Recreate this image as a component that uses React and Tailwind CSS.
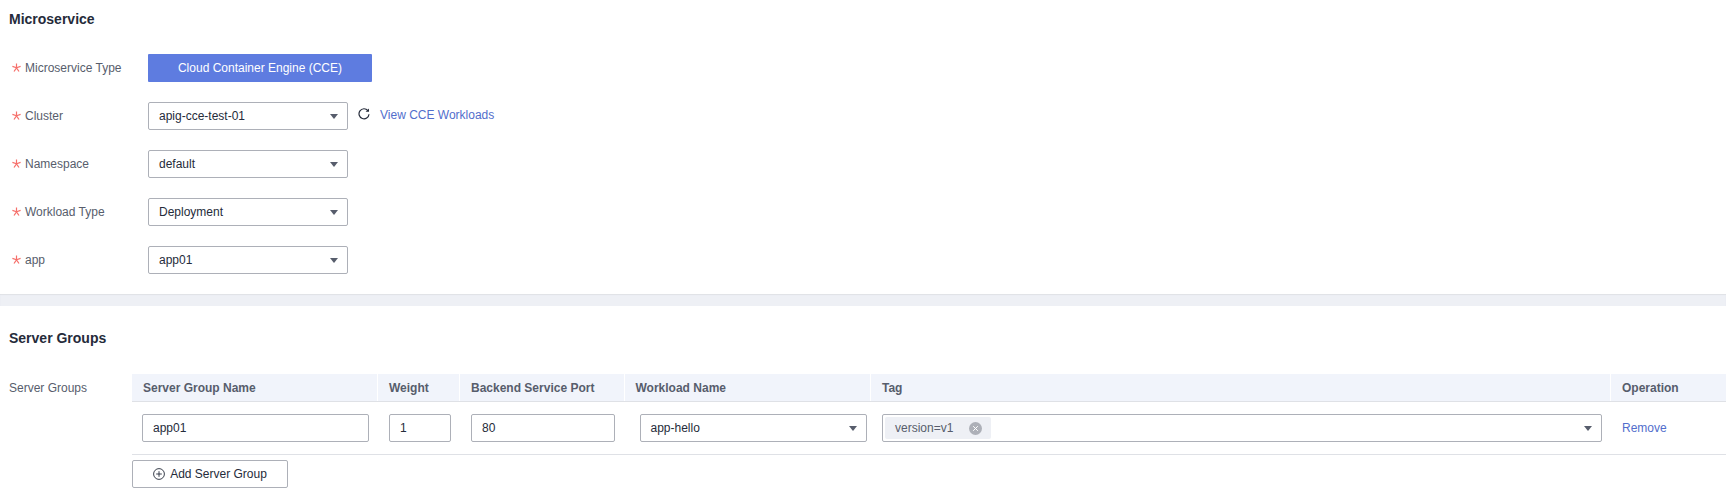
import React from 'react';

const Star = () => (
  <svg width="9" height="9" viewBox="0 0 9 9" className="mb-[1px] shrink-0 text-[#f66f6a]" fill="none" stroke="currentColor">
    <path d="M4.5 0.5V4.8M4.5 4.8L0.4 3.4M4.5 4.8L8.6 3.4M4.5 4.8L2 8.5M4.5 4.8L7 8.5" strokeWidth="1.2" />
  </svg>
);

const Caret = () => (
  <svg width="8" height="5" viewBox="0 0 8 5" className="shrink-0 text-[#575d6c]" fill="currentColor">
    <path d="M0 0H8L4 5Z" />
  </svg>
);

const Select = ({ value, className = 'w-[200px]' }) => (
  <div className={`flex h-7 items-center justify-between rounded-[2px] border border-[#adb0b8] bg-white pl-[10px] pr-[9px] text-[#252b3a] ${className}`}>
    <span>{value}</span>
    <Caret />
  </div>
);

const FormRow = ({ label, children }) => (
  <div className="flex h-7 items-center">
    <div className="flex w-[148px] items-center gap-[4px] pl-[12px] text-[#575d6c]">
      <Star />
      <span>{label}</span>
    </div>
    {children}
  </div>
);

const headers = ['Server Group Name', 'Weight', 'Backend Service Port', 'Workload Name', 'Tag', 'Operation'];

const App = () => {
  return (
    <div className="h-[496px] w-full overflow-hidden bg-white font-['Liberation_Sans',Arial,sans-serif] text-xs">
      <h2 className="flex h-9 items-center pl-[9px] pt-[1px] text-sm font-bold text-[#252b3a]">Microservice</h2>

      <div className="mt-[18px] flex flex-col gap-5 pb-5">
        <FormRow label="Microservice Type">
          <div className="flex h-7 w-[224px] items-center justify-center rounded-[1px] bg-[#5e7ce0] text-white">
            Cloud Container Engine (CCE)
          </div>
        </FormRow>
        <FormRow label="Cluster">
          <Select value="apig-cce-test-01" />
          <svg width="12" height="12" viewBox="0 0 12 12" className="ml-[10px] mb-[4px] text-[#252b3a]" fill="none" stroke="currentColor">
            <path d="M9.9 2.6A5 5 0 1 0 11 6.2" strokeWidth="1.2" />
            <path d="M11 0.4V3.8H7.6" fill="currentColor" stroke="none" />
          </svg>
          <a className="ml-[10px] mb-[3px] text-[#526ecc]">View CCE Workloads</a>
        </FormRow>
        <FormRow label="Namespace">
          <Select value="default" />
        </FormRow>
        <FormRow label="Workload Type">
          <Select value="Deployment" />
        </FormRow>
        <FormRow label="app">
          <Select value="app01" />
        </FormRow>
      </div>

      <div className="h-3 bg-[#eef0f5] shadow-[inset_0_1px_1px_#dfe1e6]" />

      <h2 className="mt-[14px] flex h-9 items-center pl-[9px] text-sm font-bold text-[#252b3a]">Server Groups</h2>

      <div className="mt-[18px] flex">
        <div className="flex h-7 w-[132px] shrink-0 items-center pl-[9px] text-[#575d6c]">Server Groups</div>
        <div className="min-w-0 flex-1">
          <div className="grid h-7 grid-cols-[246px_82px_164.5px_246.5px_740px_1fr] border-b border-[#dfe1e6] bg-[#f1f4fb] font-bold text-[#575d6c]">
            {headers.map((h, i) => (
              <div key={h} className={`flex items-center border-white pl-[11px] ${i < 5 ? 'border-r' : ''}`}>
                {h}
              </div>
            ))}
          </div>

          <div className="grid h-[53px] grid-cols-[246px_82px_164.5px_246.5px_740px_1fr] items-center border-b border-[#dfe1e6] text-[#252b3a]">
            <div className="pl-[10px]">
              <div className="flex h-7 w-[227px] items-center rounded-[2px] border border-[#adb0b8] pl-[10px]">app01</div>
            </div>
            <div className="pl-[11px]">
              <div className="flex h-7 w-[62px] items-center rounded-[2px] border border-[#adb0b8] pl-[10px]">1</div>
            </div>
            <div className="pl-[11px]">
              <div className="flex h-7 w-[144px] items-center rounded-[2px] border border-[#adb0b8] pl-[10px]">80</div>
            </div>
            <div className="pl-[15px]">
              <Select value="app-hello" className="w-[227px]" />
            </div>
            <div className="pl-[11px]">
              <div className="flex h-7 w-[720px] items-center justify-between rounded-[2px] border border-[#adb0b8] pl-[2px] pr-[9px]">
                <span className="flex h-[22px] w-[106px] items-center justify-between rounded-[2px] bg-[#eef0f5] pl-[10px] pr-[9px] text-[#575d6c]">
                  version=v1
                  <svg width="13" height="13" viewBox="0 0 13 13">
                    <circle cx="6.5" cy="6.5" r="6.5" fill="#adb0b8" />
                    <path d="M4.2 4.2L8.8 8.8M8.8 4.2L4.2 8.8" stroke="#fff" strokeWidth="1" />
                  </svg>
                </span>
                <Caret />
              </div>
            </div>
            <div className="pl-[11px]">
              <a className="text-[#526ecc]">Remove</a>
            </div>
          </div>

          <button className="mt-[5px] flex h-7 w-[156px] items-center justify-center gap-[5px] rounded-[2px] border border-[#adb0b8] text-[#252b3a]">
            <svg width="12" height="12" viewBox="0 0 12 12" fill="none" stroke="currentColor" strokeWidth="0.9">
              <circle cx="6" cy="6" r="5.4" />
              <path d="M6 3.2V8.8M3.2 6H8.8" />
            </svg>
            Add Server Group
          </button>
        </div>
      </div>
    </div>
  );
};

export default App;
